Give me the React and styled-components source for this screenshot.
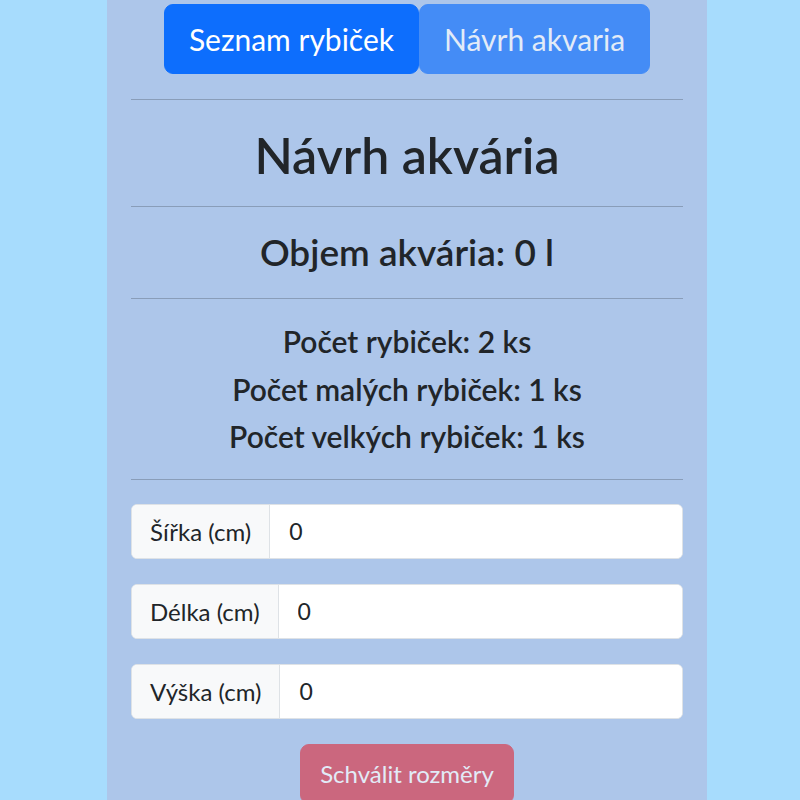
import React from 'react';
import styled, { createGlobalStyle } from 'styled-components';

const GlobalStyle = createGlobalStyle`
  body {
    margin: 0;
    background: #a7dcfd;
    font-family: 'Lato', 'Noto Sans', sans-serif;
    color: #212529;
  }
`;

const Column = styled.div`
  width: 600px;
  min-height: 800px;
  margin-left: 107px;
  padding: 4px 24px 0;
  box-sizing: border-box;
  background: #adc6ea;
  text-align: center;
`;

const Nav = styled.div`
  display: flex;
  justify-content: center;
`;

const NavButton = styled.button`
  height: 70px;
  padding: 0 24px;
  border: 1px solid #0d6efd;
  border-radius: 9px;
  background: #0d6efd;
  color: #fff;
  font-family: inherit;
  font-size: 30px;
  opacity: ${p => (p.$disabled ? 0.65 : 1)};
`;

const Rule = styled.hr`
  margin: ${p => p.$top || 0}px 0 0;
  border: 0;
  border-top: 1px solid #212529;
  opacity: 0.25;
`;

const Title = styled.h1`
  margin: 23px 0 19px;
  font-size: 50px;
  font-weight: 600;
  line-height: 64px;
`;

const Volume = styled.h3`
  margin: 22px 0 23px;
  font-size: 37px;
  font-weight: 600;
  line-height: 46px;
`;

const Counts = styled.div`
  display: flex;
  flex-direction: column;
  padding: 19px 0 18px;
`;

const CountLine = styled.h5`
  margin: 0;
  font-size: 30px;
  font-weight: 600;
  line-height: 47.5px;
`;

const Form = styled.div`
  display: flex;
  flex-direction: column;
  gap: 25px;
  padding-top: 24px;
`;

const InputGroup = styled.div`
  display: flex;
  box-sizing: border-box;
  height: 55px;
  border: 1px solid #dee2e6;
  border-radius: 6px;
  overflow: hidden;
  background: #fff;
`;

const Addon = styled.span`
  display: flex;
  align-items: center;
  padding: 0 18px;
  background: #f8f9fa;
  border-right: 1px solid #dee2e6;
  font-size: 24px;
`;

const Field = styled.input`
  flex: 1;
  border: 0;
  padding: 0 19px;
  font-family: inherit;
  font-size: 23px;
  color: #212529;
  outline: none;
`;

const Approve = styled.button`
  margin-top: 25px;
  height: 60px;
  padding: 0 19px;
  border: 1px solid #dc3545;
  border-radius: 9px;
  background: #dc3545;
  color: #fff;
  font-family: inherit;
  font-size: 24px;
  opacity: 0.65;
`;

const fields = [
  { label: 'Šířka (cm)', value: '0' },
  { label: 'Délka (cm)', value: '0' },
  { label: 'Výška (cm)', value: '0' },
];

export default function App() {
  return (
    <>
      <GlobalStyle />
      <Column>
        <Nav>
          <NavButton>Seznam rybiček</NavButton>
          <NavButton $disabled>Návrh akvaria</NavButton>
        </Nav>
        <Rule $top={25} />
        <Title>Návrh akvária</Title>
        <Rule />
        <Volume>Objem akvária: 0 l</Volume>
        <Rule />
        <Counts>
          <CountLine>Počet rybiček: 2 ks</CountLine>
          <CountLine>Počet malých rybiček: 1 ks</CountLine>
          <CountLine>Počet velkých rybiček: 1 ks</CountLine>
        </Counts>
        <Rule />
        <Form>
          {fields.map(f => (
            <InputGroup key={f.label}>
              <Addon>{f.label}</Addon>
              <Field defaultValue={f.value} />
            </InputGroup>
          ))}
        </Form>
        <Approve>Schválit rozměry</Approve>
      </Column>
    </>
  );
}
